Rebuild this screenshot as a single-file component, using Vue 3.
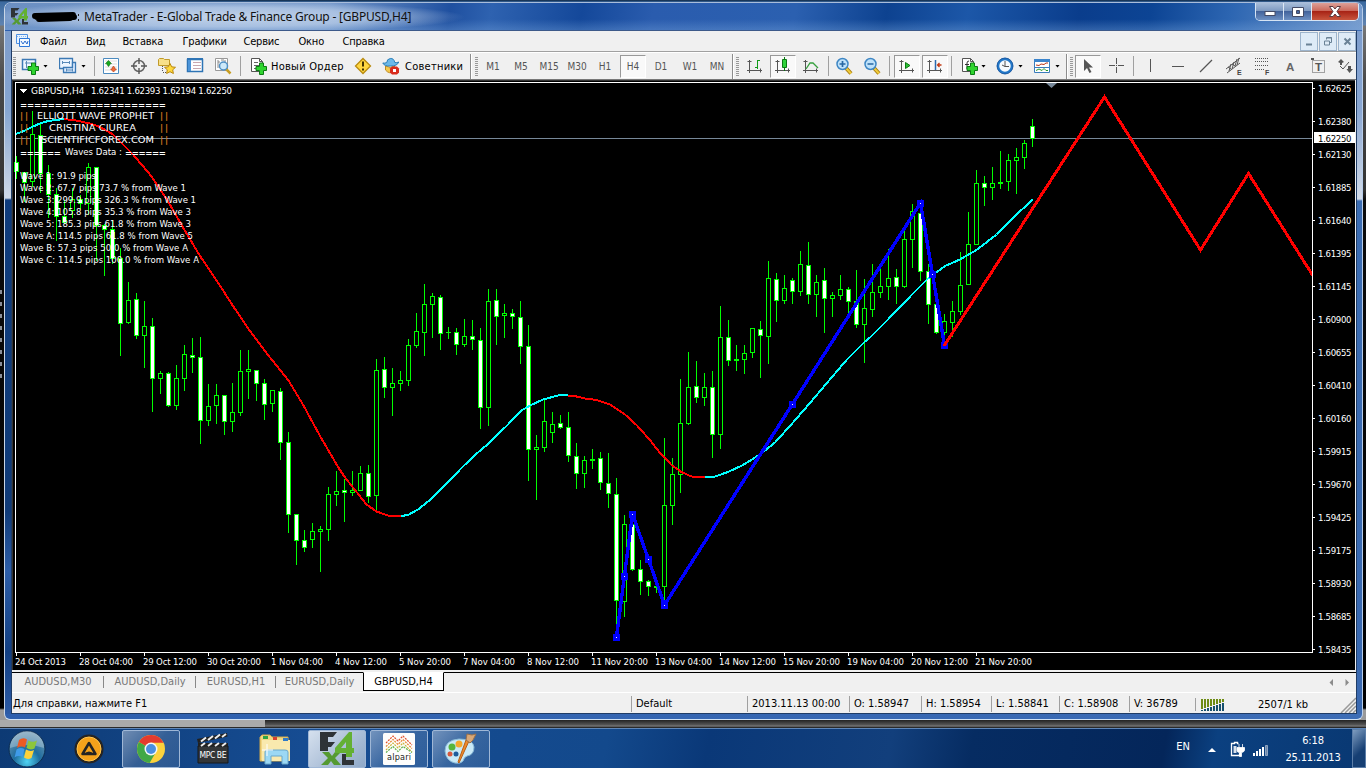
<template>
  <div class="desktop">
    <div class="window">
      <header class="titlebar">
        <svg class="app-icon" width="17" height="17" viewBox="0 0 34 34" v-html="icons.fx"></svg>
        <svg class="scribble" width="50" height="12" viewBox="0 0 50 12">
          <path d="M5 5 L43 4 M7 6 L44 6 M9 8 L40 7" stroke="#000" stroke-width="6" stroke-linecap="round" />
          <path d="M48.500 3v2M48.500 8v2" stroke="#222" />
        </svg>
        <span class="title">MetaTrader - E-Global Trade &amp; Finance Group - [GBPUSD,H4]</span>
        <div class="window-buttons">
          <span class="wb min"><svg width="12" height="10"><rect x="1" y="4.500" width="10" height="4" fill="#fff" stroke="#444b66" /></svg></span>
          <span class="wb max"><svg width="12" height="10"><path d="M.5.5h11v9H.5z M4.500 3.500h3v3h-3z" fill="#fff" fill-rule="evenodd" stroke="#444b66" /></svg></span>
          <span class="wb close"><svg width="14" height="11"><path d="M1.500.500h3.500l2 2.500 2-2.500h3.500l-3.500 5 3.500 5H9l-2-2.500-2 2.500H1.500l3.500-5z" fill="#fff" stroke="#5b3a40" /></svg></span>
        </div>
      </header>

      <div class="client">
        <nav class="menu">
          <svg width="16" height="16" viewBox="0 0 16 16" class="menu-icon">
            <path d="M1.500 1.500h11v9h-11z" fill="#e8f3ff" stroke="#4f8fe0" />
            <path d="M2 3.500h10" stroke="#8fbcf0" stroke-dasharray="1 1" />
            <path d="M4.500 5.500h10v8h-10z" fill="#f4faff" stroke="#2f78d8" />
            <path d="M6 8l2 3 2-3 2 3 1-3" fill="none" stroke="#2f6fd0" />
          </svg>
          <span v-for="item in menu" :key="item.text" :style="{ width: item.w + 'px' }">{{ item.text }}</span>
          <div class="mdi-buttons">
            <span><svg width="17" height="17"><path d="M5 11.500h6" stroke="#6a8296" stroke-width="2" /></svg></span>
            <span><svg width="17" height="17"><path d="M6.500 6.500v-2h5v5h-2M7 5h5" fill="none" stroke="#6a8296" /><path d="M4.500 8h5v4h-5z" fill="none" stroke="#6a8296" /></svg></span>
            <span><svg width="17" height="17"><path d="M5.500 5.500l6 6M11.500 5.500l-6 6" stroke="#6a8296" stroke-width="2" /></svg></span>
          </div>
        </nav>

        <div class="toolbar">
          <div
            v-for="(t, i) in tools"
            :key="i"
            :class="[t.kind, { pressed: t.on }]"
            :style="{ marginLeft: (t.gap || 0) + 'px', width: t.w + 'px' }"
          >
            <svg v-if="t.icon" width="18" height="18" viewBox="0 0 18 18" v-html="icons[t.icon]"></svg>
            <template v-else>{{ t.text }}</template>
          </div>
        </div>

        <svg class="chart" width="1343" height="590" viewBox="12 80 1343 590">
          <rect x="12" y="80" width="1343" height="590" fill="#000" />
          <path d="M12 80.500h1343M12.500 80v590" stroke="#333" />
          <rect x="15" y="138" width="1298" height="1" fill="#778899" />
          <g shape-rendering="crispEdges">
            <g v-for="c in candles" :key="c.x">
              <rect :x="c.x" :y="c.high" width="1" :height="c.low - c.high" fill="#0f0" />
              <rect v-if="c.bottom - c.top < 3" :x="c.x - 2" :y="c.top" width="5" :height="c.bottom - c.top" fill="#0f0" />
              <rect v-else :x="c.x - 1.5" :y="c.top + 0.5" width="4" :height="c.bottom - c.top - 1" :fill="c.down ? '#fff' : '#000'" stroke="#0f0" />
            </g>
            <polyline v-for="(line, i) in average" :key="'ma' + i" :points="line.points" fill="none" :stroke="line.color" stroke-width="2" />
            <polyline points="616.500,637 632.500,514 664.500,605 920.500,203 944.500,345" fill="none" stroke="#00f" stroke-width="3.400" />
            <g v-for="p in handles" :key="p[0]">
              <rect :x="p[0] - 3" :y="p[1] - 3" width="7" height="7" fill="#00f" />
              <rect :x="p[0]" :y="p[1]" width="1" height="1" fill="#fff" />
            </g>
            <polyline points="944,346 1104.500,97 1200.500,250 1248.500,173.500 1312.500,275" fill="none" stroke="#f00" stroke-width="3" />
          </g>
          <g fill="#fff" shape-rendering="crispEdges">
            <rect x="15" y="82" width="1298" height="1" />
            <rect x="15" y="82" width="1" height="571" />
            <rect x="15" y="652" width="1298" height="1" />
            <rect x="1312" y="82" width="1" height="571" />
            <rect v-for="(p, i) in prices" :key="p" x="1313" :y="88 + i * 33" width="2" height="1" />
            <rect v-for="(d, i) in dates" :key="d.text" :x="16 + i * 64" y="653" width="1" height="3" />
            <path d="M19 89h8l-4 4z" />
          </g>
          <path d="M1046 83h11l-5.500 5z" fill="#778899" />
          <g class="chart-text">
            <text x="31" y="94" textLength="53.500" lengthAdjust="spacingAndGlyphs">GBPUSD,H4</text>
            <text x="91" y="94" textLength="141">1.62341 1.62393 1.62194 1.62250</text>
            <text class="rule" x="20" y="107.500" textLength="146">=====================</text>
            <text x="37" y="119" textLength="117" lengthAdjust="spacingAndGlyphs">ELLIOTT WAVE PROPHET</text>
            <text x="49" y="131" textLength="87" lengthAdjust="spacingAndGlyphs">CRISTINA CIUREA</text>
            <text x="41" y="143" textLength="113" lengthAdjust="spacingAndGlyphs">SCIENTIFICFOREX.COM</text>
            <text class="rule" x="20" y="155.500" textLength="41">======</text>
            <text x="65" y="155" textLength="57">Waves Data :</text>
            <text class="rule" x="125" y="155.500" textLength="41">======</text>
            <text v-for="(w, i) in waves" :key="w.text" x="20" :y="179 + i * 12" :textLength="w.w">{{ w.text }}</text>
            <g class="bars">
              <template v-for="y in [119, 131, 143]" :key="y">
                <text x="20" :y="y" textLength="8">||</text>
                <text x="160" :y="y" textLength="8">||</text>
              </template>
            </g>
            <text v-for="(p, i) in prices" :key="p" x="1318" :y="91.500 + i * 33" textLength="33.500">{{ p }}</text>
            <text v-for="(d, i) in dates" :key="d.text" :x="15 + i * 64" y="665" :textLength="d.w">{{ d.text }}</text>
          </g>
          <rect x="1314" y="132" width="41" height="11" fill="#fff" />
          <text class="chart-text now" x="1318" y="141.500" textLength="33.500">1.62250</text>
        </svg>

        <div class="tabs">
          <span v-for="tab in tabs" :key="tab.text" :class="{ active: tab.active }" :style="{ width: tab.w + 'px' }">{{ tab.text }}</span>
          <svg class="tab-arrows" width="26" height="9"><path d="M6 1v7L2.500 4.500zM18.500 1v7L22 4.500z" fill="#8c8c8c" /></svg>
        </div>

        <footer class="status">
          <span v-for="s in status" :key="s.text" :style="{ width: s.w + 'px' }">{{ s.text }}</span>
          <svg class="signal" width="24" height="13" shape-rendering="crispEdges">
            <template v-for="i in 8" :key="i">
              <rect :x="(i - 1) * 3" y="1" width="2" :height="10.500 - i" fill="#6e8c14" />
              <rect :x="(i - 1) * 3" :y="12.500 - i" width="2" :height="i + 0.500" fill="#17506e" />
            </template>
          </svg>
          <b>2507/1 kb</b>
          <svg class="grip-corner" width="16" height="16"><path d="M1 16L16 1M5 16L16 5M9 16l7-7M13 16l3-3" stroke="#999" stroke-width="1.500" /></svg>
        </footer>
      </div>
    </div>

    <div class="behind"></div>

    <div class="taskbar">
      <svg class="start" width="38" height="38" viewBox="0 0 38 38">
        <defs>
          <radialGradient id="orb" cx=".5" cy=".85" r=".8">
            <stop offset="0" stop-color="#4fd4f4" />
            <stop offset=".45" stop-color="#1f6d9e" />
            <stop offset="1" stop-color="#6d98b4" />
          </radialGradient>
        </defs>
        <circle cx="19" cy="19" r="18" fill="url(#orb)" stroke="#0c2c50" />
        <path d="M2 18a17 17 0 0 1 34 0q-17-6-34 0z" fill="#fff" opacity=".28" />
        <path d="M11 10q4-3 8-.5l-2 8q-4-2-8 .5z" fill="#ec5a24" />
        <path d="M20.500 10.500q4 2.500 8.500 0l-2.500 8q-4 2-8-.5z" fill="#8cc63c" />
        <path d="M8.500 19.500q4-2.500 8-.5l-2 8q-4-2-8 .500z" fill="#3f9be8" />
        <path d="M18 19.500q4 2.500 8 .5l-2.500 8q-4 2-7.500-.500z" fill="#fdd23a" />
      </svg>
      <div class="task plain"><svg width="30" height="30" viewBox="0 0 30 30" v-html="icons.aimp"></svg></div>
      <div class="task"><svg width="30" height="30" viewBox="0 0 30 30" v-html="icons.chrome"></svg></div>
      <div class="task plain"><svg width="32" height="32" viewBox="0 0 32 32" v-html="icons.mpc"></svg></div>
      <div class="task plain"><svg width="34" height="32" viewBox="0 0 34 32" v-html="icons.explorer"></svg></div>
      <div class="task current"><svg width="34" height="34" viewBox="0 0 34 34" v-html="icons.fx"></svg></div>
      <div class="task"><svg width="32" height="32" viewBox="0 0 32 32" v-html="icons.alpari"></svg></div>
      <div class="task"><svg width="34" height="34" viewBox="0 0 34 34" v-html="icons.paint"></svg></div>
      <div class="tray">
        <span class="lang">EN</span>
        <svg width="62" height="18" viewBox="0 0 62 18">
          <path d="M1 12l4-4 4 4z" fill="#fff" />
          <path d="M31.500 3.500h-1v-1h-3v1h-3v12h8v-2" fill="none" stroke="#fff" stroke-width="1.300" />
          <path d="M26.500 6v7h3V6z" fill="#fff" opacity=".85" />
          <path d="M30 7.500h7.500v3q-1 2-3 2v4h-2v-4q-2.500 0-2.500-2zM32 4v4M35.500 4v4" fill="#fff" stroke="#fff" stroke-width=".8" />
          <path d="M46 13h2v3h-2zM49 11h2v5h-2zM52 9h2v7h-2zM55 7h2v9h-2z" fill="#fff" />
          <path d="M58.500 5.500h2v10h-2z" fill="#6c86a8" stroke="#8ea5c2" />
        </svg>
      </div>
      <div class="clock"><div>6:18</div><div>25.11.2013</div></div>
      <div class="show-desktop"></div>
    </div>
  </div>
</template>

<script setup>
const plus = '<path d="M11 5.500h4v3.500h3v4h-3v4h-4v-4H7.500V9H11z" transform="translate(-.5 .5)" fill="#2fd42f" stroke="#0c7a14"/>';
const axes = '<path d="M3.500 3v13M1 13.500h15M1.500 4.500h4M14.500 11.500v4" stroke="#555" fill="none"/>';
const lens = '<path d="M11 11l5 5.500" stroke="#a87c10" stroke-width="4"/><path d="M11 11l5 5.500" stroke="#f0cc3c" stroke-width="2"/><circle cx="7.500" cy="7" r="5.500" fill="#bfe2fa" stroke="#3f87c4" stroke-width="1.500"/>';
const sheet = '<path d="M2.500 1.500h8l3 3v10h-11z" fill="#fff" stroke="#555"/><path d="M10.500 1.500v3h3" fill="none" stroke="#555"/>';

const icons = {
  newChart: '<path d="M1.500 2.500h13v10h-13z" fill="#eef6ff" stroke="#3c79b4" stroke-width="1.500"/><path d="M4 6h7M5.500 4v7" stroke="#5a8ab8"/>' + plus,
  profiles: '<path d="M.5 1.500h13v10H.5z" fill="#eef6ff" stroke="#3c79b4" stroke-width="1.300"/><path d="M3 5.500h8M3.500 4v3M10.500 4v3" stroke="#5a8ab8"/><path d="M4.500 10.500v5h12v-10h-3v5z" fill="#dcecff" stroke="#3c79b4" stroke-width="1.300"/><path d="M7 13h7M7.500 11.500v3M13.500 11.500v3" stroke="#5a8ab8"/>',
  market: '<path d="M1.500 1.500h15v15h-15z" fill="#fff" stroke="#4c8bc0"/><path d="M3 4h12M3 7h12M3 10h12M3 13h12" stroke="#ddd"/><path d="M6.500 3.500l3 3H8v1l-1.500 2L5 7.500v-1H3.500z" fill="#17a81f" stroke="#0b7012" stroke-width=".6"/><path d="M11.500 15l-3-3H10v-1l1.500-2 1.500 2v1h1.500z" fill="#ef6a3a" stroke="#b23c14" stroke-width=".6"/>',
  target: '<circle cx="9" cy="9" r="5.500" fill="none" stroke="#666" stroke-width="1.500"/><path d="M9 1v6M9 11v6M1 9h6M11 9h6" stroke="#555" stroke-width="1.400"/>',
  favorites: '<path d="M.5 2.500l1-1h4l1 1h5v6h-11z" fill="#f8e08a" stroke="#c09a2a"/><path d="M4.500 9v6M5 15.500h3" stroke="#555" stroke-dasharray="1 1"/><path d="M12 6.500l1.700 3.300 3.800.5-2.800 2.500.7 3.700-3.400-1.800-3.400 1.800.7-3.700L6.500 10.300l3.800-.5z" fill="#ffd83c" stroke="#b8870f"/>',
  terminal: '<path d="M1.500 2.500h15v12h-15z" fill="#fff" stroke="#2e74b5" stroke-width="1.500"/><path d="M2 3h3v11H2z" fill="#4c94d8"/><path d="M7 5.500h8M7 8.500h8M7 11.500h8" stroke="#c9a8b0"/><path d="M1 2h16" stroke="#2e74b5" stroke-width="2"/>',
  tester: '<path d="M1.500 1.500h12v12h-12z" fill="#fff" stroke="#999"/><path d="M4 3v8M11 3v6M4 5h2M7 3h3" stroke="#888"/><path d="M12 12l4.500 4.500" stroke="#c79d22" stroke-width="2.500"/><circle cx="9.500" cy="9" r="4" fill="#cde9fa" stroke="#4f90c6" stroke-width="1.500"/>',
  order: sheet + '<path d="M5 5.500h4M5 8.500h6M5 11.500h3" stroke="#666"/>' + plus,
  warning: '<path d="M9 1.500L16.500 9 9 16.500 1.500 9z" fill="#ffd640" stroke="#b98b10" stroke-width="1.300"/><path d="M9 4.500v5" stroke="#423200" stroke-width="2"/><path d="M8 11.500h2v2H8z" fill="#423200"/>',
  advisors: '<path d="M3.500 9q5 3 9 0v5q-5 4-9-1z" fill="#f5c84a" stroke="#bf8b1d"/><path d="M.8 6q1.500 3.500 8 3 6.500 0 8-4-2 1-4 .5-1-4.500-4.500-4-3.500.5-3.500 4-2 1-4 .5z" fill="#6cb8e8" stroke="#2b7fb8"/><path d="M10 9.500h5l2 2v4l-2 2h-5l-2-2v-4z" fill="#d92b1c"/><path d="M11 12h3v3h-3z" fill="#fff"/>',
  bars: axes + '<path d="M11.500 3v9M9 10.500h2.500M11.500 3.500H14" stroke="#119c19" fill="none"/>',
  candle: axes + '<path d="M10.500 0v14" stroke="#0a7a12"/><path d="M8.500 2.500h4v8h-4z" fill="#2ed33a" stroke="#0a7a12"/>',
  line: axes + '<path d="M4 12l4-6h3l5 5" stroke="#36a03e" fill="none" stroke-width="1.300"/>',
  zoomIn: lens + '<path d="M4.500 7h6M7.500 4v6" stroke="#2767a3" stroke-width="1.700"/>',
  zoomOut: lens + '<path d="M4.500 7h6" stroke="#2767a3" stroke-width="1.700"/>',
  scroll: axes + '<path d="M7.500 5.500l4.500 3-4.500 3z" fill="#2bbf35" stroke="#0b7a12"/>',
  shift: axes + '<path d="M9.500 3v10" stroke="#2a6ab0" stroke-width="1.500"/><path d="M15.500 8h-4m2-2L11.500 8l2 2" stroke="#c23a14" fill="none" stroke-width="1.300"/>',
  indicators: sheet + '<path d="M9 4q-2 0-2 2v6M5 7.500h4" stroke="#333" fill="none"/>' + plus,
  clock: '<circle cx="9" cy="9" r="7" fill="#f6fbff" stroke="#2277c8" stroke-width="2.500"/><circle cx="9" cy="9" r="8" fill="none" stroke="#1a4f94" stroke-width=".7"/><path d="M9 4v5.500h4M6 8l3 1.500" stroke="#555" fill="none"/>',
  templates: '<path d="M1.500 2.500h15v13h-15z" fill="#fff" stroke="#3a7cbc"/><path d="M1 3.500h16" stroke="#3a84cc" stroke-width="3"/><path d="M3 8l3 .5 2-1.500 3 .5 2-1.500h2" stroke="#b8381c" fill="none"/><path d="M2 10.500h14" stroke="#3a7cbc"/><path d="M3 13.500l3-1.500 3 1.500 2-2 2 2h2" stroke="#279a2c" fill="none"/>',
  cursor: '<path d="M5 2v12l3-3 2.500 5 2-1-2.500-4.500H14z" fill="#555"/>',
  cross: '<path d="M9.500 1v6M9.500 10v6M2 8.500h6M11 8.500h6" stroke="#555"/><path d="M9 8h1v1H9z" fill="#555"/>',
  vline: '<path d="M9.500 2v13" stroke="#555"/>',
  hline: '<path d="M3 9.500h12" stroke="#555"/>',
  trend: '<path d="M3 15L15 3" stroke="#555" stroke-width="1.300"/>',
  channel: '<path d="M1 12L15 1M2 16L15 6M4 14l2-7M7 12l2-7M10 9l2-7M12 8l2-7M3 10l3 2M7 7l3 2" stroke="#555" fill="none"/><text x="12" y="18" font-size="7" font-weight="bold" font-family="Liberation Sans" fill="#444">E</text>',
  fibo: '<path d="M2 1.500h14M2 4.500h14M2 8.500h14M2 12.500h9" stroke="#555" stroke-dasharray="1 1"/><text x="12" y="18" font-size="7" font-weight="bold" font-family="Liberation Sans" fill="#444">F</text>',
  text: '<text x="5" y="13.500" font-size="11.500" font-weight="bold" font-family="Liberation Sans" fill="#666">A</text>',
  label: '<path d="M3.500 3.500h12v12h-12z" fill="none" stroke="#555" stroke-dasharray="1 1"/><path d="M2 1h3v2H2z" fill="#555"/><text x="6" y="14" font-size="11.500" font-weight="bold" font-family="Liberation Sans" fill="#555">T</text>',
  arrows: '<path d="M5 2l3 3-2 1v2H4V6L2 5zM12 9h3v3h2l-3.500 4-3-4H12z" fill="#555"/><path d="M4 9l3 3 6-7" stroke="#555" fill="none"/>',
  fx: '<path d="M0 0h17l-4 5H8v5h7l-4 5H8v4H0z" fill="#2e3337"/><path d="M2 20h7l3 4 3-4h6l-6 6 6 7h-7l-3-4-3 4H1l7-7z" fill="#559a32"/><path d="M15 16L29 0h3v16h2v5h-2v4h-6v-4H15zM21 16h5v-6z" fill="#63b033" fill-rule="evenodd"/><path d="M22 22h4v6h8v5H22z" fill="#2e3337"/>',
  aimp: '<circle cx="15" cy="15" r="14.500" fill="#252423"/><circle cx="15" cy="15" r="12" fill="#f5a21b"/><circle cx="15" cy="15" r="12" fill="none" stroke="#ffc650"/><path d="M15 9l6.500 11h-13z" fill="none" stroke="#252423" stroke-width="2.500" stroke-linejoin="round"/><path d="M10 20q5-5 10 0" fill="#252423"/>',
  chrome: '<circle cx="15" cy="15" r="14" fill="#fcd23c"/><path d="M15 15L2.900 8A14 14 0 0 1 27.500 8.700H15z" fill="#e33b2e"/><path d="M15 15L2.900 8A14 14 0 0 0 13.600 29L20 18z" fill="#41a846"/><circle cx="15" cy="15" r="6.500" fill="#f4f6f8"/><circle cx="15" cy="15" r="5" fill="#4a8fe0"/>',
  mpc: '<path d="M1 13h30v17H1z" fill="#333638" stroke="#17191a"/><path d="M0 6L30 0l.5 3.500L1 10zM1 10h30v3H1z" fill="#222"/><path d="M4 8.500l5-4M11 7l5-4M18 5.500l5-4M25 4l4-3M4 13l4-3M11 13l4-3M18 13l4-3M25 13l4-3" stroke="#eee" stroke-width="2"/><text x="2.500" y="25" font-size="8.500" font-family="DejaVu Sans Condensed" fill="#fff" textLength="27">MPC BE</text>',
  explorer: '<path d="M2 4l2-2h8l2 2h16v24H2z" fill="#f2d784" stroke="#d0a94a"/><path d="M4 7h28v21H4z" fill="#f9e9ae"/><path d="M5 3h5v3H5z" fill="#2fa544"/><path d="M15 4h4v3h-4z" fill="#d8402f"/><path d="M25 5h5v3h-5z" fill="#2f7ac8"/><path d="M7 31V19q0-2 2-2h18q3 0 3 2v12h-6v-8H13v8z" fill="#9cd8f4" stroke="#69a8cc"/><path d="M9 11v12M4 17h11" stroke="#fff"/>',
  alpari: '<rect width="32" height="32" rx="1.500" fill="#fdfdfc"/><g fill="none" stroke-dasharray="2 1" stroke-width="1.200"><path d="M3 10l7-7 5 5 5-5 9 9" stroke="#e2502a"/><path d="M3 13.500l7-7 5 5 5-5 9 9" stroke="#e8852c"/><path d="M3 17l7-7 5 5 5-5 9 9" stroke="#c9b43a"/><path d="M3 19.500l7-6 5 5 5-5 9 6" stroke="#5fae4a"/></g><text x="4" y="27" font-size="9" font-family="DejaVu Sans Condensed" fill="#222" textLength="24">alpari</text>',
  paint: '<path d="M1 19q0-11 14-12 14 0 15 8 0 8-7 9-3 1-4 5-2 3-8 2Q2 29 1 19z" fill="#c9e9f7" stroke="#8abbd8"/><circle cx="8" cy="15" r="3.500" fill="#57b53c"/><circle cx="15" cy="12" r="3.500" fill="#f5a82c"/><circle cx="12" cy="22" r="2.500" fill="#1d5b9a"/><circle cx="6" cy="22" r="2.500" fill="#d8583c"/><path d="M25 9L15 31l-1-1 8-22z" fill="#ef8b2c" stroke="#b85e14"/><path d="M22 8l1-6 5 1 4-1-3 6-3 3z" fill="#d8a878" stroke="#9a704a"/>',
};

const menu = [
  { text: 'Файл', w: 46 },
  { text: 'Вид', w: 36.5 },
  { text: 'Вставка', w: 60 },
  { text: 'Графики', w: 61 },
  { text: 'Сервис', w: 55 },
  { text: 'Окно', w: 44 },
  { text: 'Справка', w: 60 },
];

const icon = (name, gap) => ({ kind: 'icon', icon: name, gap, w: 18 });
const button = (name, gap) => ({ kind: 'button', icon: name, gap, w: 28 });
const pressed = (name, gap) => ({ kind: 'button', icon: name, gap, w: 26, on: true });
const period = (text, gap) => ({ kind: 'period', text, gap, w: 28 });
const drop = (gap) => ({ kind: 'drop', gap, w: 5 });
const sep = (gap) => ({ kind: 'sep', gap, w: 1 });
const end = (gap) => ({ kind: 'end', gap, w: 2 });
const grip = (gap) => ({ kind: 'grip', gap, w: 3 });

const tools = [
  grip(1), icon('newChart', 5), drop(4), icon('profiles', 11), drop(4), sep(8),
  icon('market', 7), icon('target', 10), icon('favorites', 10), icon('terminal', 10), icon('tester', 10), sep(8),
  icon('order', 8), { kind: 'caption', text: 'Новый Ордер', gap: 4, w: 74 },
  icon('warning', 9), icon('advisors', 10), { kind: 'caption', text: 'Советники', gap: 5, w: 58 },
  end(7), grip(3),
  period('M1', 1), period('M5'), period('M15'), period('M30'), period('H1'),
  { kind: 'period', text: 'H4', gap: 1, w: 26, on: true },
  period('D1', 1), period('W1', 1), period('MN', -1),
  end(1), grip(2),
  button('bars', 2), pressed('candle', 1), button('line', 1), sep(3),
  button('zoomIn', 1), button('zoomOut'), sep(3),
  pressed('scroll', 4), pressed('shift', 2), sep(3),
  icon('indicators', 8), drop(3), icon('clock', 10), drop(4), icon('templates', 10), drop(4),
  end(6), grip(2),
  pressed('cursor', 2), button('cross', 1), sep(3),
  button('vline', 2), button('hline'), button('trend'), button('channel'), button('fibo'), button('text'), button('label'), button('arrows', -1),
];

const prices = [
  '1.62625', '1.62380', '1.62130', '1.61885', '1.61640', '1.61395', '1.61145', '1.60900', '1.60655',
  '1.60410', '1.60160', '1.59915', '1.59670', '1.59425', '1.59175', '1.58930', '1.58685', '1.58435',
];

const dates = [
  { text: '24 Oct 2013', w: 51 },
  { text: '28 Oct 04:00', w: 54 },
  { text: '29 Oct 12:00', w: 54 },
  { text: '30 Oct 20:00', w: 54 },
  { text: '1 Nov 04:00', w: 52 },
  { text: '4 Nov 12:00', w: 52 },
  { text: '5 Nov 20:00', w: 52 },
  { text: '7 Nov 04:00', w: 52 },
  { text: '8 Nov 12:00', w: 52 },
  { text: '11 Nov 20:00', w: 57 },
  { text: '13 Nov 04:00', w: 57 },
  { text: '14 Nov 12:00', w: 57 },
  { text: '15 Nov 20:00', w: 57 },
  { text: '19 Nov 04:00', w: 57 },
  { text: '20 Nov 12:00', w: 57 },
  { text: '21 Nov 20:00', w: 57 },
];

const waves = [
  { text: 'Wave 1: 91.9 pips', w: 76 },
  { text: 'Wave 2: 67.7 pips 73.7 % from Wave 1', w: 166 },
  { text: 'Wave 3: 299.9 pips 326.3 % from Wave 1', w: 176 },
  { text: 'Wave 4: 105.8 pips 35.3 % from Wave 3', w: 171 },
  { text: 'Wave 5: 185.3 pips 61.8 % from Wave 3', w: 171 },
  { text: 'Wave A: 114.5 pips 61.8 % from Wave 5', w: 173 },
  { text: 'Wave B: 57.3 pips 50.0 % from Wave A', w: 168 },
  { text: 'Wave C: 114.5 pips 100.0 % from Wave A', w: 179 },
];

// high, low, body top, body bottom, 1 = falling; one bar every 8px
const bars = [
  [156, 179, 162, 172, 1], [172, 202, 172, 183, 1], [111, 187, 134, 182, 0], [122, 193, 135, 174, 1],
  [165, 218, 173, 195, 1], [188, 241, 194, 217, 1], [200, 224, 216, 223, 1], [188, 218, 199, 211, 0],
  [195, 209, 199, 204, 1], [163, 215, 167, 204, 0], [167, 261, 167, 226, 1], [224, 276, 225, 230, 1],
  [220, 264, 229, 259, 1], [248, 356, 258, 324, 1], [282, 324, 300, 323, 0], [293, 339, 299, 336, 1],
  [301, 368, 326, 336, 0], [318, 412, 326, 379, 1], [371, 394, 373, 379, 0], [372, 407, 373, 406, 1],
  [365, 410, 378, 406, 0], [345, 391, 354, 379, 0], [338, 373, 355, 358, 1], [337, 444, 357, 421, 1],
  [384, 426, 406, 421, 0], [384, 424, 395, 406, 0], [395, 435, 395, 422, 1], [383, 432, 412, 422, 0],
  [350, 416, 371, 413, 0], [350, 399, 369, 372, 0], [370, 401, 370, 384, 1], [379, 420, 383, 405, 1],
  [390, 412, 390, 404, 0], [388, 460, 391, 443, 1], [432, 533, 442, 515, 1], [514, 565, 514, 541, 1],
  [530, 552, 540, 548, 1], [523, 548, 531, 540, 0], [526, 572, 529, 532, 0], [487, 541, 494, 530, 0],
  [471, 506, 491, 495, 0], [479, 522, 490, 493, 1], [471, 496, 490, 493, 0], [466, 491, 473, 491, 0],
  [465, 503, 473, 497, 1], [359, 511, 370, 496, 0], [357, 398, 369, 388, 1], [368, 416, 383, 388, 0],
  [371, 391, 380, 384, 0], [339, 386, 345, 381, 0], [313, 348, 331, 346, 0], [284, 356, 304, 333, 0],
  [293, 338, 296, 305, 0], [295, 350, 297, 334, 1], [327, 339, 332, 333, 0], [328, 355, 332, 345, 1],
  [319, 347, 336, 345, 0], [320, 350, 336, 340, 1], [328, 429, 340, 408, 1], [289, 426, 301, 408, 0],
  [289, 345, 300, 317, 1], [304, 338, 313, 316, 0], [309, 329, 313, 317, 1], [301, 364, 317, 347, 1],
  [325, 481, 346, 450, 1], [435, 500, 447, 450, 0], [400, 452, 421, 448, 0], [412, 443, 424, 433, 0],
  [415, 429, 423, 428, 1], [412, 462, 427, 456, 1], [443, 489, 456, 474, 1], [456, 488, 460, 474, 0],
  [449, 469, 459, 461, 0], [452, 490, 458, 483, 1], [453, 508, 483, 494, 1], [478, 625, 494, 601, 1],
  [515, 617, 524, 602, 0], [517, 571, 524, 570, 1], [560, 595, 569, 582, 1], [580, 596, 581, 587, 1],
  [586, 593, 586, 588, 0], [438, 603, 505, 587, 0], [458, 525, 474, 506, 0], [379, 493, 423, 475, 0],
  [352, 425, 387, 424, 0], [361, 403, 386, 398, 1], [373, 406, 387, 398, 0], [371, 458, 387, 435, 1],
  [306, 449, 337, 435, 0], [320, 366, 337, 361, 1], [345, 371, 359, 361, 0], [345, 374, 353, 360, 0],
  [328, 358, 328, 353, 0], [321, 378, 329, 336, 1], [261, 364, 278, 337, 0], [273, 322, 279, 301, 1],
  [275, 304, 288, 301, 0], [278, 304, 280, 292, 1], [251, 296, 264, 292, 0], [242, 304, 265, 295, 1],
  [275, 317, 282, 295, 0], [268, 333, 280, 299, 1], [292, 317, 295, 299, 0], [275, 300, 289, 296, 0],
  [287, 313, 289, 302, 1], [270, 328, 301, 325, 1], [279, 363, 308, 325, 0], [264, 317, 292, 310, 0],
  [266, 298, 286, 293, 0], [249, 300, 278, 287, 0], [269, 304, 277, 287, 1], [225, 288, 239, 287, 0],
  [204, 268, 211, 240, 0], [208, 281, 213, 272, 1], [264, 324, 271, 305, 1], [300, 334, 304, 333, 1],
  [314, 345, 321, 333, 0], [301, 337, 311, 323, 0], [252, 315, 285, 312, 0], [212, 285, 244, 285, 0],
  [170, 245, 183, 245, 0], [176, 206, 183, 188, 1], [167, 200, 183, 188, 0], [151, 189, 182, 184, 0],
  [154, 191, 160, 182, 0], [148, 194, 157, 161, 0], [140, 169, 143, 158, 0], [119, 147, 126, 139, 1],
];

const candles = bars.map(([high, low, top, bottom, down], i) => ({ x: 16 + i * 8, high, low, top, bottom, down }));

const average = [
  { color: '#0ff', points: '16,134 24,131 32,127 40,123.500 48,121 56,120 65,119' },
  { color: '#f00', points: '64,119 76,120.500 90,123.500 100,127 113,134.500 133,154.500 150,174.500 167,199.500 183,227.500 200,256 217,281 233,306 250,331 268,355 288.500,380.500 303.500,405.500 320,436 339,468.500 345,477.500 355,490 366.500,504.500 376.500,511.500 388,515.500 401,516' },
  { color: '#0ff', points: '401,516 408,515 418,509.500 430,500 446.500,483.500 463,466.500 475,455 488,444 507,425.500 521.500,410.500 530,405.500 543,399.500 560,395 568,395' },
  { color: '#f00', points: '568,396 576.500,396.500 585,398.500 596.500,400 610,404.500 625,414.500 636.500,425 650,440 660,453 672,465.500 681.500,472 691.500,476.500 705,477' },
  { color: '#0ff', points: '705,477 715,476.500 728,472 743,465 760,454.500 775,442.500 793,422.500 810,403 826.500,383.500 846.500,360 865,341.500 870,337.500 886.500,321 903,304 913,293.500 928,278.500 945,266 960,259.500 976.500,250 996.500,234.500 1016.500,214.500 1033,199.500' },
];

const handles = [
  [616, 637], [624, 576], [632, 514], [648, 559], [664, 605], [792, 404], [920, 203], [932, 274], [944, 345],
];

const tabs = [
  { text: 'AUDUSD,M30', w: 92 },
  { text: 'AUDUSD,Daily', w: 92 },
  { text: 'EURUSD,H1', w: 80 },
  { text: 'EURUSD,Daily', w: 87 },
  { text: 'GBPUSD,H4', w: 81, active: true },
];

const status = [
  { text: 'Для справки, нажмите F1', w: 619 },
  { text: 'Default', w: 116 },
  { text: '2013.11.13 00:00', w: 102 },
  { text: 'O: 1.58947', w: 72 },
  { text: 'H: 1.58954', w: 70 },
  { text: 'L: 1.58841', w: 68 },
  { text: 'C: 1.58908', w: 70 },
  { text: 'V: 36789', w: 66 },
];
</script>

<style>
body {
  overflow: hidden;
  background: #000;
}
</style>

<style scoped>
.desktop {
  width: 1366px;
  height: 768px;
  overflow: hidden;
  box-sizing: border-box;
  padding: 2px 3px 0 4px;
  font-family: "DejaVu Sans Condensed", "DejaVu Sans", sans-serif;
  background:
    repeating-linear-gradient(transparent 0 6px, #8a8f98 6px 10px, transparent 10px 12px) 0 284px / 2px 96px no-repeat,
    linear-gradient(#0b2440 0, #3c6aa0 2px, #5f83b0 25px, #777 26px, #4a4a4a 80px, #333 190px, #0c0c0c 200px, #000 708px, #999 710px);
}
.window {
  box-sizing: border-box;
  width: 1359px;
  height: 718px;
  padding: 0 6px 6px 6px;
  border: 1px solid #c9dcf0;
  border-color: #a9bddb #b8cdea #cfe2f6 #c9d6e6;
  border-radius: 7px 7px 6px 6px;
  background:
    linear-gradient(#7d9dcd 0, #8aa7d2 80px, #d3dce9 168px, #3c6db2 170px, #3a69b0 100%) 100% 28px / 8px 683px no-repeat,
    linear-gradient(#7e9dcb 0, #86a5d0 80px, #cfd9e7 167px, #0f3c7c 169px, #103b78 480px, #2d5ea8 540px, #123f82 620px, #2c5ba6 100%) 0 28px / 8px 683px no-repeat,
    linear-gradient(90deg, #2d5fae, #3566b2 50%, #3d6db6);
  overflow: hidden;
}
.titlebar {
  display: flex;
  align-items: center;
  height: 27px;
  margin: 0 -6px;
  padding-left: 6px;
  background:
    radial-gradient(ellipse 245px 16px at 215px 14px, rgba(208, 222, 240, .85) 0, rgba(185, 205, 232, .75) 60%, transparent 100%),
    linear-gradient(transparent 60%, rgba(120, 165, 220, .35)),
    linear-gradient(100deg, #6b8fc2 0, #7598ca 320px, #1f50a0 440px, #2e62b0 480px, #14489a 570px, #2a5cae 640px, #2b60b0 780px, #0d4290 870px, #1c57a8 950px, #0a3d8c 1060px, #0c4494 1130px, #2d66b2 1210px, #7da0cf 1350px);
}
.app-icon {
  margin: 0 2px 0 0;
}
.scribble {
  margin-right: 4px;
}
.title {
  font-family: "Noto Sans", sans-serif;
  font-size: 12px;
  letter-spacing: -.2px;
  color: #111;
  white-space: nowrap;
}
.window-buttons {
  display: flex;
  align-self: flex-start;
  margin-left: auto;
  margin-right: 3px;
  border: 1px solid #d6e4f4;
  border-top: 0;
  border-radius: 0 0 5px 5px;
  overflow: hidden;
}
.wb {
  display: flex;
  align-items: center;
  justify-content: center;
  width: 27px;
  height: 17px;
  border-right: 1px solid #dce7f4;
  background: linear-gradient(#a8bdd9, #7c98c0 48%, #42639c 50%, #6d90c2);
}
.wb.close {
  width: 46px;
  border: 0;
  background: linear-gradient(#dca098, #cb6a5c 45%, #a82416 50%, #c8563e);
}
.client {
  box-sizing: border-box;
  width: 1346px;
  height: 684px;
  border: 1px solid #1f3c66;
  border-top-color: #3d5a8a;
  background: #f0f0f0;
  overflow: hidden;
}
.menu {
  display: flex;
  align-items: center;
  height: 20px;
  border-bottom: 1px solid #a0a0a0;
  font-size: 11px;
  letter-spacing: -.2px;
  color: #000;
}
.menu-icon {
  margin: 0 9px 0 3px;
}
.mdi-buttons {
  display: flex;
  gap: 1px;
  margin-left: auto;
}
.mdi-buttons span {
  width: 16px;
  height: 17px;
  border: 1px solid #9db4cc;
  background: #deebf7;
}
.toolbar {
  display: flex;
  align-items: center;
  height: 26px;
  border-bottom: 1px solid #777;
  border-top: 1px solid #fff;
  overflow: hidden;
  font-size: 11px;
}
.toolbar > div {
  flex: none;
  white-space: nowrap;
}
.caption {
  letter-spacing: .25px;
}
.icon svg,
.button svg {
  display: block;
  flex: none;
}
.button,
.period {
  display: flex;
  align-items: center;
  justify-content: center;
  box-sizing: border-box;
  height: 23px;
  color: #555;
  font-size: 10px;
}
.pressed {
  border: 1px solid #fff;
  border-top-color: #999;
  border-left-color: #999;
  background: #f9f9f9;
}
.drop {
  height: 3px;
  background: #000;
  clip-path: polygon(0 0, 100% 0, 50% 100%);
}
.sep {
  height: 20px;
  background: #a0a0a0;
}
.end {
  box-sizing: border-box;
  height: 25px;
  border-left: 1px solid #8c8c8c;
  border-right: 1px solid #fff;
}
.grip {
  height: 19px;
  background: repeating-linear-gradient(#999 0 1px, #f0f0f0 1px 2px);
}
.chart {
  display: block;
}
.chart-text {
  font-family: "DejaVu Sans Condensed", sans-serif;
  font-size: 9.500px;
  fill: #fff;
}
.chart-text .rule {
  font-weight: bold;
}
.chart-text .bars {
  font-weight: bold;
  fill: #d2781e;
}
.chart-text.now {
  fill: #000;
}
.tabs {
  display: flex;
  align-items: flex-start;
  height: 19px;
  margin-top: 2px;
  border-top: 1px solid #000;
  border-bottom: 1px solid #fff;
  font-size: 11px;
  color: #777;
}
.tabs span {
  box-sizing: border-box;
  height: 17px;
  line-height: 17px;
  text-align: center;
  background: linear-gradient(#888, #888) 100% 3px / 1px 12px no-repeat;
}
.tabs span:nth-child(4) {
  background: none;
}
.tabs .active {
  height: 19px;
  margin-top: -1px;
  border: 1px solid #000;
  border-top-color: #fff;
  color: #000;
  background: #fff;
}
.tab-arrows {
  margin: 5px 3px 0 auto;
}
.status {
  display: flex;
  align-items: center;
  box-sizing: border-box;
  height: 20px;
  padding-top: 2px;
  font-size: 11px;
  color: #000;
}
.status span {
  box-sizing: border-box;
  padding-left: 5px;
  line-height: 16px;
  background: linear-gradient(#a0a0a0, #a0a0a0) 0 0 / 1px 16px no-repeat;
  white-space: nowrap;
}
.status span:first-child {
  padding-left: 1px;
  background: none;
}
.signal {
  margin-right: 33px;
  padding-left: 5px;
  border-left: 1px solid #a0a0a0;
}
.status b {
  font-weight: normal;
}
.grip-corner {
  margin-left: auto;
  align-self: flex-end;
}
.behind {
  height: 8px;
  margin: 0 -3px 0 -4px;
  background:
    linear-gradient(90deg, #aaa 265px, transparent 266px) 0 0 / 265px 7px no-repeat,
    linear-gradient(#222, #555 60%, #777 75%, #111);
}
.taskbar {
  display: flex;
  align-items: center;
  height: 40px;
  margin: 0 -3px 0 -4px;
  box-sizing: border-box;
  border-top: 1px solid #5f86b8;
  padding-left: 8px;
  background: linear-gradient(100deg, #0d3a74 0, #164c92 300px, #13498c 600px, #0a3878 700px, #123f7c 880px, #062c62 960px, #04265a 1150px, #0b4080 1200px, #093872 100%);
  color: #fff;
}
.start {
  margin-right: 14px;
}
.task {
  display: flex;
  align-items: center;
  justify-content: center;
  box-sizing: border-box;
  width: 58px;
  height: 38px;
  margin-right: 4px;
  border: 1px solid #9fb7d6;
  border-radius: 2px;
  background: linear-gradient(135deg, rgba(255, 255, 255, .4), rgba(255, 255, 255, .15) 50%, rgba(255, 255, 255, .1));
}
.task.plain {
  border-color: transparent;
  background: none;
}
.task.current {
  background: linear-gradient(135deg, #d5e0ee, #a9bdd6 60%, #8fa9c9);
}
.tray {
  display: flex;
  align-items: center;
  margin-left: auto;
  font-size: 11px;
}
.lang {
  margin: -5px 17px 0 0;
}
.clock {
  width: 56px;
  margin: 0 11px 0 16px;
  text-align: center;
  font-size: 11px;
  letter-spacing: -.15px;
  line-height: 17px;
}
.show-desktop {
  box-sizing: border-box;
  width: 14px;
  height: 39px;
  border: 1px solid #5c7ea8;
  background: linear-gradient(135deg, #7f9dc0, #163f73 60%);
}
</style>
